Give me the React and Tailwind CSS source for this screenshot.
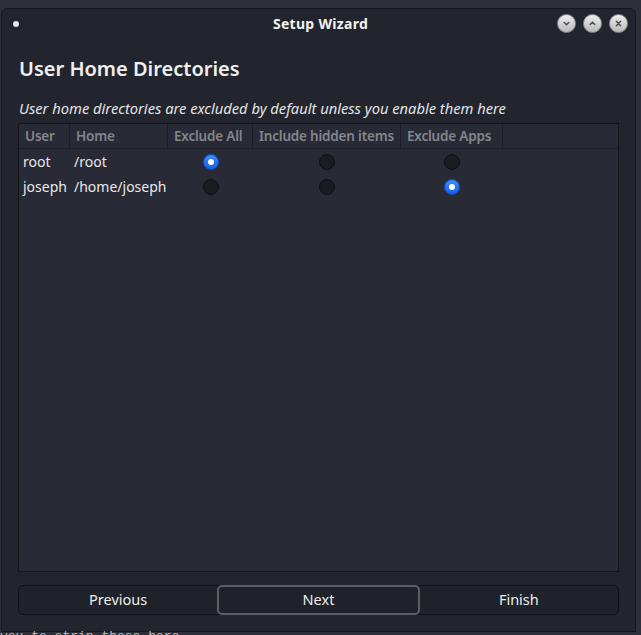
import React from "react";

const columns = [
  { key: "user", label: "User", width: "w-[51px]" },
  { key: "home", label: "Home", width: "w-[98px]" },
  { key: "all", label: "Exclude All", width: "w-[85px]" },
  { key: "hidden", label: "Include hidden items", width: "w-[148px]" },
  { key: "apps", label: "Exclude Apps", width: "w-[102px]" },
];

const users = [
  { name: "root", home: "/root", choice: "all" },
  { name: "joseph", home: "/home/joseph", choice: "apps" },
];

const Radio = ({ checked }) =>
  checked ? (
    <div className="w-[16px] h-[16px] rounded-full bg-gradient-to-b from-[#3d8bff] to-[#1560e8] border border-[#0d4fc7] flex items-center justify-center">
      <div className="w-[6px] h-[6px] rounded-full bg-white" />
    </div>
  ) : (
    <div className="w-[16px] h-[16px] rounded-full bg-[#1b1c22] border border-[#0e0f13]" />
  );

const TitleButton = ({ children }) => (
  <div className="w-[19px] h-[19px] rounded-full bg-gradient-to-b from-[#eeeeee] to-[#b9b9bb] border border-[#8d8e92] flex items-center justify-center text-[#4a4b50]">
    {children}
  </div>
);

export default function App() {
  return (
    <div className="w-[641px] h-[635px] bg-[#2d3039] overflow-hidden relative font-['Noto_Sans',sans-serif]">
      <div className="ml-[1px] mt-[8px] w-[635px] h-[624px] bg-[#23252e] border border-[#16171c] rounded-t-[6px] flex flex-col">
        {/* title bar */}
        <div className="h-[29px] grid grid-cols-[1fr_auto_1fr] items-center pl-[11px] pr-[7px]">
          <div className="w-[6px] h-[6px] rounded-full bg-[#e8e8e8]" />
          <div className="text-[14px] font-bold text-[#f2f2f2] tracking-[0.3px]">Setup Wizard</div>
          <div className="flex gap-[7px] justify-end">
            <TitleButton>
              <svg width="9" height="9" viewBox="0 0 10 10">
                <path d="M2.5 3.8 L5 6.3 L7.5 3.8" fill="none" stroke="currentColor" strokeWidth="1.6" strokeLinecap="round" />
              </svg>
            </TitleButton>
            <TitleButton>
              <svg width="9" height="9" viewBox="0 0 10 10">
                <path d="M2.5 6.2 L5 3.7 L7.5 6.2" fill="none" stroke="currentColor" strokeWidth="1.6" strokeLinecap="round" />
              </svg>
            </TitleButton>
            <TitleButton>
              <svg width="9" height="9" viewBox="0 0 10 10">
                <path d="M2.6 2.6 L7.4 7.4 M7.4 2.6 L2.6 7.4" fill="none" stroke="currentColor" strokeWidth="1.6" strokeLinecap="round" />
              </svg>
            </TitleButton>
          </div>
        </div>

        {/* body */}
        <div className="flex-1 flex flex-col px-[16px]">
          <h1 className="ml-[1px] mt-[18px] text-[20px] leading-[26px] font-semibold text-[#f0f0f0]">
            User Home Directories
          </h1>
          <p className="ml-[1px] mt-[17px] text-[14.7px] leading-[18px] italic text-[#e4e4e4]">
            User home directories are excluded by default unless you enable them here
          </p>

          <div className="mt-[6px] h-[449px] bg-[#282a35] border border-[#15161b] flex flex-col">
            <div className="flex h-[25px] border-b border-[#1d1f26]">
              {columns.map((c) => (
                <div
                  key={c.key}
                  className={`${c.width} border-r border-[#1d1f26] px-[6px] text-[13.5px] leading-[24px] font-semibold tracking-[-0.2px] text-[#84868d] whitespace-nowrap`}
                >
                  {c.label}
                </div>
              ))}
            </div>
            {users.map((u) => (
              <div key={u.name} className="flex h-[25px] items-center text-[14px] text-[#e8e8e8]">
                <div className="w-[51px] pl-[4px]">{u.name}</div>
                <div className="w-[98px] pl-[4px] whitespace-nowrap">{u.home}</div>
                <div className="w-[85px] flex justify-center">
                  <Radio checked={u.choice === "all"} />
                </div>
                <div className="w-[148px] flex justify-center">
                  <Radio checked={u.choice === "hidden"} />
                </div>
                <div className="w-[102px] flex justify-center">
                  <Radio checked={u.choice === "apps"} />
                </div>
              </div>
            ))}
          </div>

          <div className="mt-[13px] h-[30px] flex rounded-[5px] border border-[#111217] bg-[#20222a] text-[14.5px] text-[#ececec]">
            <div className="flex-1 flex items-center justify-center">Previous</div>
            <div className="flex-1 flex items-center justify-center border-2 border-[#5c5e63] rounded-[5px] -my-px">
              Next
            </div>
            <div className="flex-1 flex items-center justify-center">Finish</div>
          </div>
        </div>
      </div>
      <div className="absolute left-0 top-[630px] leading-[14px] font-['Liberation_Mono',monospace] text-[13px] text-[#b8b8b8] whitespace-nowrap">
        you to strip those here
      </div>
    </div>
  );
}
